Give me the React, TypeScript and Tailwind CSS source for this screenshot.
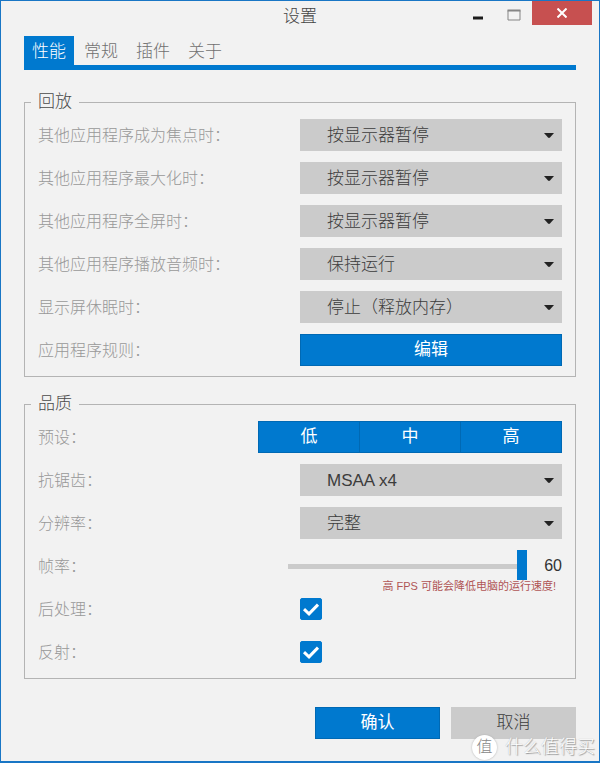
import React, { useState } from "react";

const TABS = ["性能", "常规", "插件", "关于"];

const PAUSE_OPTIONS = ["按显示器暂停", "保持运行", "停止（释放内存）"];

const PLAYBACK = [
  { id: "focus", label: "其他应用程序成为焦点时：", value: "按显示器暂停" },
  { id: "maximized", label: "其他应用程序最大化时：", value: "按显示器暂停" },
  { id: "fullscreen", label: "其他应用程序全屏时：", value: "按显示器暂停" },
  { id: "audio", label: "其他应用程序播放音频时：", value: "保持运行" },
  { id: "sleep", label: "显示屏休眠时：", value: "停止（释放内存）" },
];

type SectionProps = { title: string; className?: string; children: React.ReactNode };

const Section: React.FC<SectionProps> = ({ title, className = "", children }) => (
  <fieldset className={`border border-[#b4b4b4] px-1.5 pb-2.5 pt-[5px] ${className}`}>
    <legend className="px-[7px] text-[17px] leading-6 text-[#4a4a4a]">{title}</legend>
    <div className="flex flex-col gap-[11px] px-[7px]">{children}</div>
  </fieldset>
);

type RowProps = { label: string; htmlFor?: string; children: React.ReactNode };

const Row: React.FC<RowProps> = ({ label, htmlFor, children }) => (
  <div className="relative flex h-8 items-center justify-between">
    <label htmlFor={htmlFor} className="whitespace-nowrap pt-0.5 text-base text-[#989898]">
      {label}
    </label>
    {children}
  </div>
);

type DropdownProps = { id: string; options: string[]; initial: string };

const Dropdown: React.FC<DropdownProps> = ({ id, options, initial }) => {
  const [value, setValue] = useState(initial);
  return (
    <div className="relative h-8 w-1/2">
      <select
        id={id}
        value={value}
        onChange={(e) => setValue(e.target.value)}
        className="h-full w-full appearance-none bg-[#cbcbcb] pl-[27px] pr-8 pt-0.5 text-[17px] text-[#3c3c3c]"
      >
        {options.map((o) => (
          <option key={o}>{o}</option>
        ))}
      </select>
      <svg className="pointer-events-none absolute right-2 top-3.5 h-[5px] w-2.5" viewBox="0 0 10 5" fill="#222">
        <path d="M0 0h10L6 4.6Q5 5.4 4 4.6Z" />
      </svg>
    </div>
  );
};

const Tick: React.FC<{ id: string }> = ({ id }) => {
  const [checked, setChecked] = useState(true);
  return (
    <div className="w-1/2">
      <div className="relative h-[22px] w-[22px]">
        <input
          id={id}
          type="checkbox"
          checked={checked}
          onChange={() => setChecked(!checked)}
          className="block h-full w-full appearance-none rounded-xs border border-[#0079cf] bg-white checked:bg-[#0079cf]"
        />
        {checked && (
          <svg className="pointer-events-none absolute inset-0" viewBox="0 0 22 22" fill="none" stroke="#fff" strokeWidth="3">
            <path d="M4 11.2L9 15.8L18 6.6" />
          </svg>
        )}
      </div>
    </div>
  );
};

export default function App() {
  const [tab, setTab] = useState("性能");
  const [fps, setFps] = useState(60);

  return (
    <div className="relative flex min-h-screen flex-col border border-b-2 border-[#1976c5] bg-[#f2f2f2] font-['Liberation_Sans','Noto_Sans_CJK_SC',sans-serif] font-light">
      {/* Title bar */}
      <header className="grid h-[35px] grid-cols-[1fr_auto_1fr] items-start">
        <span />
        <h1 className="text-[17px] leading-8 text-[#444]">设置</h1>
        <div className="mr-[7px] flex justify-end">
          <button aria-label="最小化" className="flex h-6 w-9 items-center justify-center">
            <svg width="14" height="14" viewBox="0 0 14 14" fill="#1c1c1c">
              <path d="M2 10.5h10v3H2z" />
            </svg>
          </button>
          <button aria-label="最大化" className="flex h-6 w-9 items-center justify-center pt-1">
            <svg width="14" height="12" viewBox="0 0 14 12" fill="none" stroke="#858585">
              <path d="M1 1.5h12v9.5H1z" />
              <path d="M0.5 1.5h13" strokeWidth="2" />
            </svg>
          </button>
          <button aria-label="关闭" className="flex h-6 w-[60px] items-center justify-center bg-[#c75050]">
            <svg width="10" height="10" viewBox="0 0 10 10" stroke="#fff" strokeWidth="2">
              <path d="M0.5 0.5L9.5 9.5M9.5 0.5L0.5 9.5" />
            </svg>
          </button>
        </div>
      </header>

      <main className="px-[23px] pb-[22px]">
        <div role="tablist" className="flex gap-0.5 border-b-5 border-[#0079cf]">
          {TABS.map((t) => (
            <button
              key={t}
              role="tab"
              aria-selected={tab === t}
              onClick={() => setTab(t)}
              className={`h-[29px] px-2 pt-0.5 text-[17px] ${tab === t ? "bg-[#0079cf] text-white" : "text-[#707070]"}`}
            >
              {t}
            </button>
          ))}
        </div>

        <Section title="回放" className="mt-5">
          {PLAYBACK.map((p) => (
            <Row key={p.id} label={p.label} htmlFor={p.id}>
              <Dropdown id={p.id} options={PAUSE_OPTIONS} initial={p.value} />
            </Row>
          ))}
          <Row label="应用程序规则：" htmlFor="rules">
            <button id="rules" className="h-8 w-1/2 border border-[#0069b4] bg-[#0079cf] text-[17px] font-normal text-white">
              编辑
            </button>
          </Row>
        </Section>

        <Section title="品质" className="mt-[15px]">
          <Row label="预设：">
            <div className="flex h-8 w-[58%] divide-x divide-[#0069b4] border border-[#0069b4] bg-[#0079cf] text-[17px] font-normal text-white">
              <button className="flex-1">低</button>
              <button className="flex-1">中</button>
              <button className="flex-1">高</button>
            </div>
          </Row>
          <Row label="抗锯齿：" htmlFor="msaa">
            <Dropdown id="msaa" options={["MSAA x2", "MSAA x4", "MSAA x8"]} initial="MSAA x4" />
          </Row>
          <Row label="分辨率：" htmlFor="resolution">
            <Dropdown id="resolution" options={["完整", "一半"]} initial="完整" />
          </Row>
          <Row label="帧率：" htmlFor="fps">
            <div className="flex w-[274px] items-center gap-[17px]">
              <input
                id="fps"
                type="range"
                min={10}
                max={60}
                value={fps}
                onChange={(e) => setFps(Number(e.target.value))}
                className="h-7 min-w-0 flex-1 appearance-none bg-transparent [&::-webkit-slider-runnable-track]:h-[5px] [&::-webkit-slider-runnable-track]:bg-[#cbcbcb] [&::-webkit-slider-thumb]:-mt-3.5 [&::-webkit-slider-thumb]:h-[30px] [&::-webkit-slider-thumb]:w-2.5 [&::-webkit-slider-thumb]:appearance-none [&::-webkit-slider-thumb]:bg-[#0079cf]"
              />
              <span className="text-base text-[#333]">{fps}</span>
            </div>
            <p className="absolute right-1.5 top-7 text-[11px] font-normal leading-4 text-[#b05555]">高 FPS 可能会降低电脑的运行速度!</p>
          </Row>
          <Row label="后处理：" htmlFor="post">
            <Tick id="post" />
          </Row>
          <Row label="反射：" htmlFor="reflection">
            <Tick id="reflection" />
          </Row>
        </Section>

        <div className="mt-7 flex justify-end gap-[11px] text-[17px]">
          <button className="h-8 w-[125px] border border-[#0069b4] bg-[#0079cf] font-normal text-white">确认</button>
          <button className="h-8 w-[125px] bg-[#cbcbcb] text-[#3c3c3c]">取消</button>
        </div>
      </main>

      {/* Watermark */}
      <div className="pointer-events-none absolute bottom-0 right-1 flex items-center gap-2">
        <span className="flex h-[25px] w-[25px] items-center justify-center rounded-full bg-white text-base text-[#888] shadow-[0_0_2px_#aaa]">
          值
        </span>
        <span className="text-lg leading-7 text-white [text-shadow:1px_1px_1px_#999,0_0_1px_#aaa]">什么值得买</span>
      </div>
    </div>
  );
}
